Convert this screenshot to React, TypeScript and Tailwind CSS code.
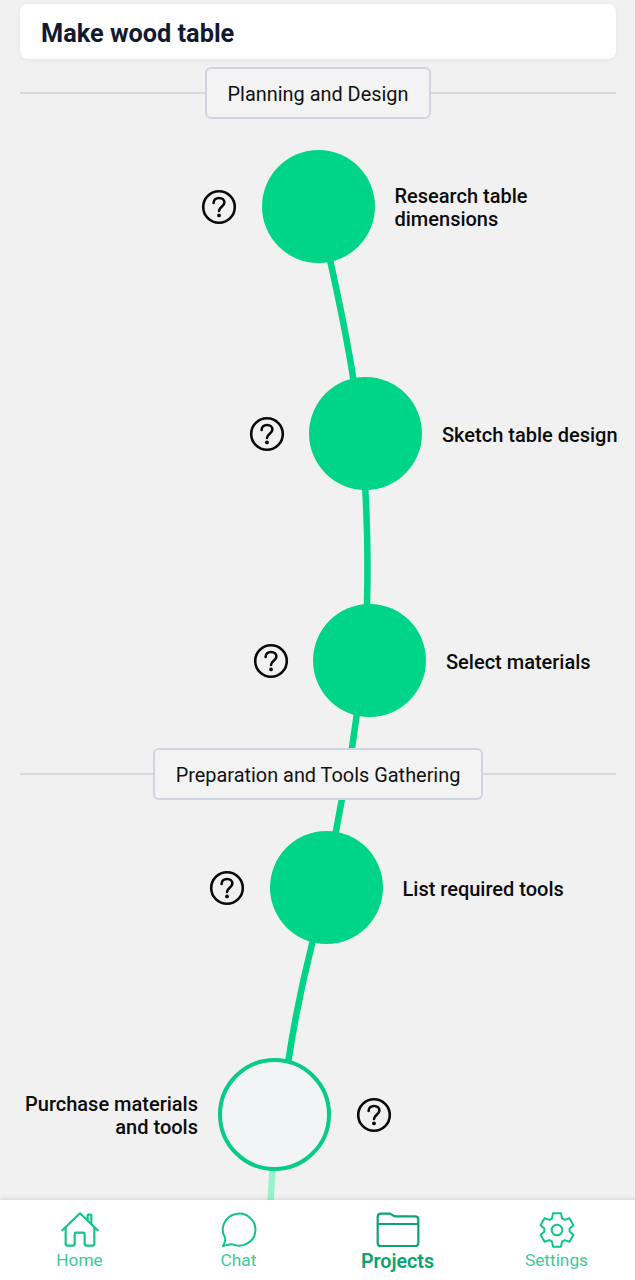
import type { ReactNode } from 'react';

const RADIUS = 56.5;

interface Task {
  label: string;
  x: number;
  done: boolean;
  labelSide: 'left' | 'right';
}

interface Stage {
  title: string;
  tasks: Task[];
}

const stages: Stage[] = [
  {
    title: 'Planning and Design',
    tasks: [
      { label: 'Research table dimensions', x: 318, done: true, labelSide: 'right' },
      { label: 'Sketch table design', x: 365.5, done: true, labelSide: 'right' },
      { label: 'Select materials', x: 369.5, done: true, labelSide: 'right' },
    ],
  },
  {
    title: 'Preparation and Tools Gathering',
    tasks: [
      { label: 'List required tools', x: 326, done: true, labelSide: 'right' },
      { label: 'Purchase materials and tools', x: 274.5, done: false, labelSide: 'left' },
    ],
  },
];

function StageHeading({ title }: { title: string }) {
  return (
    <div className="flex h-[52px] items-center px-5">
      <div className="h-[2px] flex-1 bg-[#d6d9e0]" />
      <h2 className="flex h-[52px] items-center rounded-md border-[2.5px] border-[#d0d4de] bg-[#f3f3f4] px-[21px] pt-[3px] text-[19.9px] text-[#111]">
        {title}
      </h2>
      <div className="h-[2px] flex-1 bg-[#d6d9e0]" />
    </div>
  );
}

function HelpButton() {
  return (
    <button className="flex size-[45px] shrink-0 items-center justify-center text-[#0a0a0a]" aria-label="Help">
      <svg width="36" height="36" viewBox="0 0 36 36" fill="none" stroke="currentColor" strokeWidth="2.6" strokeLinecap="round">
        <circle cx="18" cy="18" r="15.8" />
        <path d="M12.600 13.900 C12.600 10.700 15 9 18 9 C21.200 9 23.400 10.900 23.400 13.600 C23.400 17.700 18 17.800 18 22" />
        <circle cx="18" cy="26.400" r="1.900" fill="currentColor" stroke="none" />
      </svg>
    </button>
  );
}

function TaskRow({ task }: { task: Task }) {
  const label = (
    <span className="max-w-[182px] text-[20px] leading-[23px] font-medium text-[#0c0c0c]">{task.label}</span>
  );
  const labelLeft = task.labelSide === 'left';

  return (
    <div className="flex h-[113px] items-center">
      <div
        className={labelLeft ? 'flex shrink-0 justify-end pr-5 pt-[3px] text-right' : 'flex shrink-0 justify-end pr-5'}
        style={{ width: task.x - RADIUS }}
      >
        {labelLeft ? label : <HelpButton />}
      </div>
      <div
        className={
          task.done
            ? 'size-[113px] shrink-0 rounded-full bg-[#00d488]'
            : 'size-[113px] shrink-0 rounded-full border-4 border-[#06cc87] bg-[#f3f4f6]'
        }
      />
      <div className={labelLeft ? 'flex flex-1 pl-5' : 'flex flex-1 pl-5 pt-[3px]'}>
        {labelLeft ? <HelpButton /> : label}
      </div>
    </div>
  );
}

function Trail() {
  return (
    <svg className="absolute inset-0" width="636" height="1280" fill="none" strokeWidth="6.5">
      <path
        stroke="#00d488"
        d="M317 206 C321 222 330 258 330.500 262 Q346 332 353.500 380 L364 450 L365.300 490 Q368.500 545 367 604 L362 680 L356.700 715 L352 748 L341.700 800 L336 831 L322 890 L312.500 942 Q297 1003 288.200 1062"
      />
      <path stroke="#99f2cd" d="M274 1140 L272.500 1171 L270.500 1202" />
    </svg>
  );
}

function HomeIcon() {
  return (
    <svg width="40" height="38" viewBox="0 0 120 114" fill="none" stroke="currentColor" strokeWidth="6.5" strokeLinecap="round" strokeLinejoin="round">
      <path d="M7 58 L60 7 L113 58" />
      <path d="M17 50 V99 Q17 104 22 104 H40 Q44 104 44 100 V69 Q44 65 48 65 H70 Q74 65 74 69 V100 Q74 104 78 104 H98 Q103 104 103 99 V50" />
      <path d="M83 27 V13 Q83 11 85 11 H92 Q94 11 94 13 V37" />
    </svg>
  );
}

function ChatIcon() {
  return (
    <svg width="38" height="38" viewBox="0 0 114 114" fill="none" stroke="currentColor" strokeWidth="6" strokeLinejoin="round">
      <path d="M15 80 A49 48 0 1 1 38 100 C29 98 20 103 9 105 C12 99 18 90 15 80 Z" />
    </svg>
  );
}

function FolderIcon() {
  return (
    <svg width="44" height="36" viewBox="0 0 132 108" fill="none" stroke="currentColor" strokeWidth="6.5" strokeLinejoin="round">
      <path d="M5 15 Q5 5 15 5 H39 Q43 5 47 8 L52 11 Q55 13 60 13 H117 Q127 13 127 23 V92 Q127 102 117 102 H15 Q5 102 5 92 Z" />
      <path d="M5 36 H127" />
    </svg>
  );
}

const gearPoints = Array.from({ length: 6 }, (_, i) => {
  const angle = (i * Math.PI) / 3;
  return [
    [-15, -35],
    [-12, -50],
    [12, -50],
    [15, -35],
  ].map(([x, y]) => {
    const px = 57 + x * Math.cos(angle) - y * Math.sin(angle);
    const py = 57 + x * Math.sin(angle) + y * Math.cos(angle);
    return `${px.toFixed(1)},${py.toFixed(1)}`;
  });
})
  .flat()
  .join(' ');

function GearIcon() {
  return (
    <svg width="38" height="38" viewBox="0 0 114 114" fill="none" stroke="currentColor" strokeWidth="6" strokeLinejoin="round">
      <polygon points={gearPoints} />
      <circle cx="57" cy="57" r="16" />
    </svg>
  );
}

function NavItem({ icon, label, active = false }: { icon: ReactNode; label: string; active?: boolean }) {
  return (
    <button className={active ? 'flex w-[159px] flex-col items-center text-[#0ba370]' : 'flex w-[159px] flex-col items-center text-[#10c586]'}>
      <span className="flex h-[38px] items-center justify-center">{icon}</span>
      <span className={active ? 'mt-[2px] text-[19.7px] leading-[22px] font-semibold' : 'mt-px text-[17.3px] leading-[20px] text-[#3bcb99]'}>
        {label}
      </span>
    </button>
  );
}

export default function App() {
  return (
    <div className="relative flex h-[1280px] w-[636px] flex-col overflow-hidden bg-[#f1f1f1] font-['Roboto',sans-serif]">
      <Trail />
      <header className="relative mx-5 mt-1 flex h-[55px] shrink-0 items-center rounded-lg bg-white px-[21px] pt-[5px] shadow-[0_1px_5px_rgba(0,0,0,0.06)]">
        <h1 className="text-[25.3px] font-bold text-[#111a30]">Make wood table</h1>
      </header>

      <main className="relative mt-2 min-h-0 flex-1">
        {stages.map((stage) => (
          <section key={stage.title} className="mb-[31px]">
            <StageHeading title={stage.title} />
            <div className="mt-[31px] flex flex-col gap-[114px]">
              {stage.tasks.map((task) => (
                <TaskRow key={task.label} task={task} />
              ))}
            </div>
          </section>
        ))}
      </main>

      <nav className="relative flex h-20 shrink-0 bg-white pt-[11px] shadow-[0_-1px_4px_rgba(0,0,0,0.12)]">
        <NavItem icon={<HomeIcon />} label="Home" />
        <NavItem icon={<ChatIcon />} label="Chat" />
        <NavItem icon={<FolderIcon />} label="Projects" active />
        <NavItem icon={<GearIcon />} label="Settings" />
      </nav>
      <div className="absolute inset-y-0 right-0 w-px bg-[#cfcfd4]" />
    </div>
  );
}
